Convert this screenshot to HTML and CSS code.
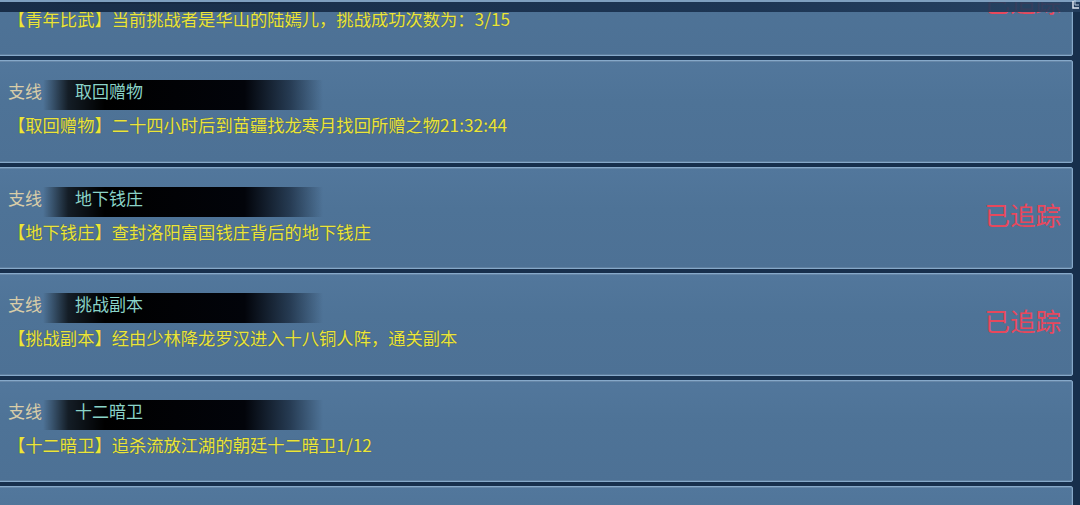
FILE: index.html
```html
<!DOCTYPE html>
<html lang="zh">
<head>
<meta charset="utf-8">
<link rel="stylesheet" href="styles.css">
</head>
<body>
<div class="frame">
  <div class="list">
    <div class="card">
      <div class="main">
        <div class="head"><span class="kind">支线</span><span class="bar">青年比武</span></div>
        <div class="desc">【青年比武】当前挑战者是华山的陆嫣儿，挑战成功次数为：3/15</div>
      </div>
      <div class="status">已追踪</div>
    </div>
    <div class="card">
      <div class="main">
        <div class="head"><span class="kind">支线</span><span class="bar">取回赠物</span></div>
        <div class="desc">【取回赠物】二十四小时后到苗疆找龙寒月找回所赠之物21:32:44</div>
      </div>
    </div>
    <div class="card">
      <div class="main">
        <div class="head"><span class="kind">支线</span><span class="bar">地下钱庄</span></div>
        <div class="desc">【地下钱庄】查封洛阳富国钱庄背后的地下钱庄</div>
      </div>
      <div class="status">已追踪</div>
    </div>
    <div class="card">
      <div class="main">
        <div class="head"><span class="kind">支线</span><span class="bar">挑战副本</span></div>
        <div class="desc">【挑战副本】经由少林降龙罗汉进入十八铜人阵，通关副本</div>
      </div>
      <div class="status">已追踪</div>
    </div>
    <div class="card">
      <div class="main">
        <div class="head"><span class="kind">支线</span><span class="bar">十二暗卫</span></div>
        <div class="desc">【十二暗卫】追杀流放江湖的朝廷十二暗卫1/12</div>
      </div>
    </div>
    <div class="card">
      <div class="main">
        <div class="head"><span class="kind">支线</span><span class="bar">门派任务</span></div>
        <div class="desc">【门派任务】</div>
      </div>
    </div>
  </div>
  <div class="topband">
    <svg class="corner" width="8" height="12" viewBox="0 0 8 12"><path d="M1 1 L1 8 L7 8" fill="none" stroke="#dfe8f2" stroke-width="1.5"/><path d="M3 0 L3 5 L7 5" fill="none" stroke="#b8c8da" stroke-width="1"/></svg>
  </div>
</div>
</body>
</html>
```
FILE: styles.css
```css
html, body {
  margin: 0;
  padding: 0;
  background: #1b3553;
}
.frame {
  position: relative;
  width: 1080px;
  height: 505px;
  overflow: hidden;
  background: #172f4c;
  font-family: "Noto Sans CJK SC", "Noto Sans", sans-serif;
}
.list {
  width: 1076px;
  margin-left: -3px;
  margin-top: -46.5px;
  display: flex;
  flex-direction: column;
  gap: 4px;
}
.card {
  height: 102.5px;
  box-sizing: border-box;
  display: flex;
  align-items: stretch;
  background: linear-gradient(180deg, #52779c 0%, #4e7397 40%, #4d7195 100%);
  border: 1px solid #86a9ca;
  border-radius: 2px;
  box-shadow: inset 0 1px 0 rgba(255,255,255,0.12), inset -1px 0 0 rgba(255,255,255,0.08), inset 0 -1px 0 rgba(255,255,255,0.1);
}
.main {
  flex: 1;
  padding: 19px 0 0 10px;
}
.head {
  display: flex;
  align-items: flex-start;
  height: 30px;
}
.kind {
  width: 35px;
  font-size: 17px;
  line-height: 22px;
  color: #d9cda8;
}
.bar {
  width: 248px;
  height: 30px;
  padding-left: 32px;
  font-size: 17px;
  line-height: 22px;
  color: #8ad3c8;
  background: linear-gradient(90deg, rgba(0,0,0,0) 0%, rgba(0,0,0,0.75) 9%, #000 22%, #02040a 72%, rgba(10,20,35,0.6) 88%, rgba(0,0,0,0) 100%);
}
.desc {
  margin-top: 5px;
  font-size: 17.3px;
  line-height: 20px;
  color: #ebe53a;
  white-space: nowrap;
  text-shadow: 0 0 1px rgba(40,40,0,0.5);
}
.status {
  align-self: center;
  margin-right: 11px;
  margin-bottom: 8px;
  font-size: 25.5px;
  line-height: 30px;
  color: #e8485c;
}
.topband {
  position: absolute;
  top: 0;
  left: 0;
  width: 1080px;
  height: 12px;
  border-top: 2px solid #7e9fbf;
  box-sizing: border-box;
  background: linear-gradient(90deg, rgba(22,42,68,0.96) 0%, rgba(26,50,80,0.94) 70%, rgba(36,62,94,0.9) 100%);
}
.corner {
  position: absolute;
  right: 0;
  top: -2px;
}
```
